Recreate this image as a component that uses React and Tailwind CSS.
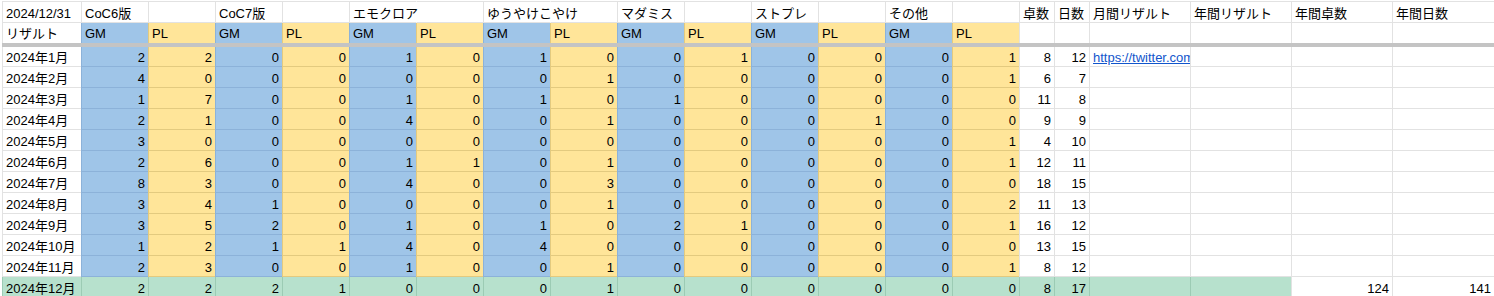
import React from 'react';

const COLS = 'grid grid-cols-[79px_repeat(14,67px)_35px_35px_101px_101px_101px_102px]';

const CELL = {
  w: 'bg-white border-[#e2e2e2]',
  b: 'bg-[#9fc5e8] border-[#8cb2d9]',
  y: 'bg-[#ffe599] border-[#e3ca7f]',
  g: 'bg-[#b7e1cd] border-[#9ccbb4]',
};

const BASE = 'flex items-end overflow-hidden whitespace-nowrap border-l px-[3px] leading-[16px]';

function Cell({ c = 'w', right, bottom = true, top, children, extra = '' }) {
  return (
    <div
      className={
        BASE +
        ' ' +
        CELL[c] +
        (right ? ' justify-end' : ' justify-start') +
        (bottom ? ' border-b' : '') +
        (top ? ' border-t' : '') +
        ' ' +
        extra
      }
    >
      {children}
    </div>
  );
}

const head1 = [
  '2024/12/31', 'CoC6版', '', 'CoC7版', '', 'エモクロア', '', 'ゆうやけこやけ', '', 'マダミス', '', 'ストプレ', '', 'その他', '',
  '卓数', '日数', '月間リザルト', '年間リザルト', '年間卓数', '年間日数',
];

const OVERFLOW = [5, 7];

const data = [
  ['2024年1月', [2, 2, 0, 0, 1, 0, 1, 0, 0, 1, 0, 0, 0, 1], 8, 12],
  ['2024年2月', [4, 0, 0, 0, 0, 0, 0, 1, 0, 0, 0, 0, 0, 1], 6, 7],
  ['2024年3月', [1, 7, 0, 0, 1, 0, 1, 0, 1, 0, 0, 0, 0, 0], 11, 8],
  ['2024年4月', [2, 1, 0, 0, 4, 0, 0, 1, 0, 0, 0, 1, 0, 0], 9, 9],
  ['2024年5月', [3, 0, 0, 0, 0, 0, 0, 0, 0, 0, 0, 0, 0, 1], 4, 10],
  ['2024年6月', [2, 6, 0, 0, 1, 1, 0, 1, 0, 0, 0, 0, 0, 1], 12, 11],
  ['2024年7月', [8, 3, 0, 0, 4, 0, 0, 3, 0, 0, 0, 0, 0, 0], 18, 15],
  ['2024年8月', [3, 4, 1, 0, 0, 0, 0, 1, 0, 0, 0, 0, 0, 2], 11, 13],
  ['2024年9月', [3, 5, 2, 0, 1, 0, 1, 0, 2, 1, 0, 0, 0, 1], 16, 12],
  ['2024年10月', [1, 2, 1, 1, 4, 0, 4, 0, 0, 0, 0, 0, 0, 0], 13, 15],
  ['2024年11月', [2, 3, 0, 0, 1, 0, 0, 1, 0, 0, 0, 0, 0, 1], 8, 12],
];

const dec = ['2024年12月', [2, 2, 2, 1, 0, 0, 0, 1, 0, 0, 0, 0, 0, 0], 8, 17];

function DataRow({ row, h }) {
  const [label, vals, tables, days] = row;
  return (
    <div className={COLS + ' ' + h}>
      <Cell>{label}</Cell>
      {vals.map((v, i) => (
        <Cell key={i} c={i % 2 === 0 ? 'b' : 'y'} right>
          {v}
        </Cell>
      ))}
      <Cell right>{tables}</Cell>
      <Cell right>{days}</Cell>
      <Cell>
        {label === '2024年1月' ? (
          <span className="text-[#1155cc] underline">https://twitter.com/</span>
        ) : null}
      </Cell>
      <Cell />
      <Cell />
      <Cell />
    </div>
  );
}

export default function App() {
  return (
    <div
      className="w-[1494px] h-[296px] overflow-hidden bg-white pl-[2px] pt-px text-[13px] text-black"
      style={{ fontFamily: '"Liberation Sans", Arial, "Noto Sans CJK JP", sans-serif' }}
    >
      {/* header row 1 */}
      <div className={COLS + ' h-[22px]'}>
        {head1.map((t, i) => {
          if (OVERFLOW.includes(i))
            return (
              <Cell key={i} top extra="overflow-visible">
                <span className="relative z-10">{t}</span>
              </Cell>
            );
          if (OVERFLOW.includes(i - 1)) return <Cell key={i} top extra="border-l-white" />;
          return (
            <Cell key={i} top>
              {t}
            </Cell>
          );
        })}
      </div>
      {/* header row 2 */}
      <div className={COLS + ' h-[20px]'}>
        <Cell bottom={false} extra="pb-px">リザルト</Cell>
        {Array.from({ length: 14 }).map((_, i) => (
          <Cell key={i} c={i % 2 === 0 ? 'b' : 'y'} bottom={false} extra="pb-px">
            {i % 2 === 0 ? 'GM' : 'PL'}
          </Cell>
        ))}
        {Array.from({ length: 6 }).map((_, i) => (
          <Cell key={'e' + i} bottom={false} />
        ))}
      </div>
      {/* frozen separator */}
      <div className="h-[4px] bg-[#c4c4c4]" />
      {data.map((r, i) => (
        <DataRow key={r[0]} row={r} h={i === 0 ? 'h-[20px]' : 'h-[21px]'} />
      ))}
      {/* December row */}
      <div className={COLS + ' h-[21px]'}>
        <Cell c="g">{dec[0]}</Cell>
        {dec[1].map((v, i) => (
          <Cell key={i} c="g" right>
            {v}
          </Cell>
        ))}
        <Cell c="g" right>{dec[2]}</Cell>
        <Cell c="g" right>{dec[3]}</Cell>
        <Cell c="g" />
        <Cell c="g" />
        <Cell right>124</Cell>
        <Cell right>141</Cell>
      </div>
    </div>
  );
}
